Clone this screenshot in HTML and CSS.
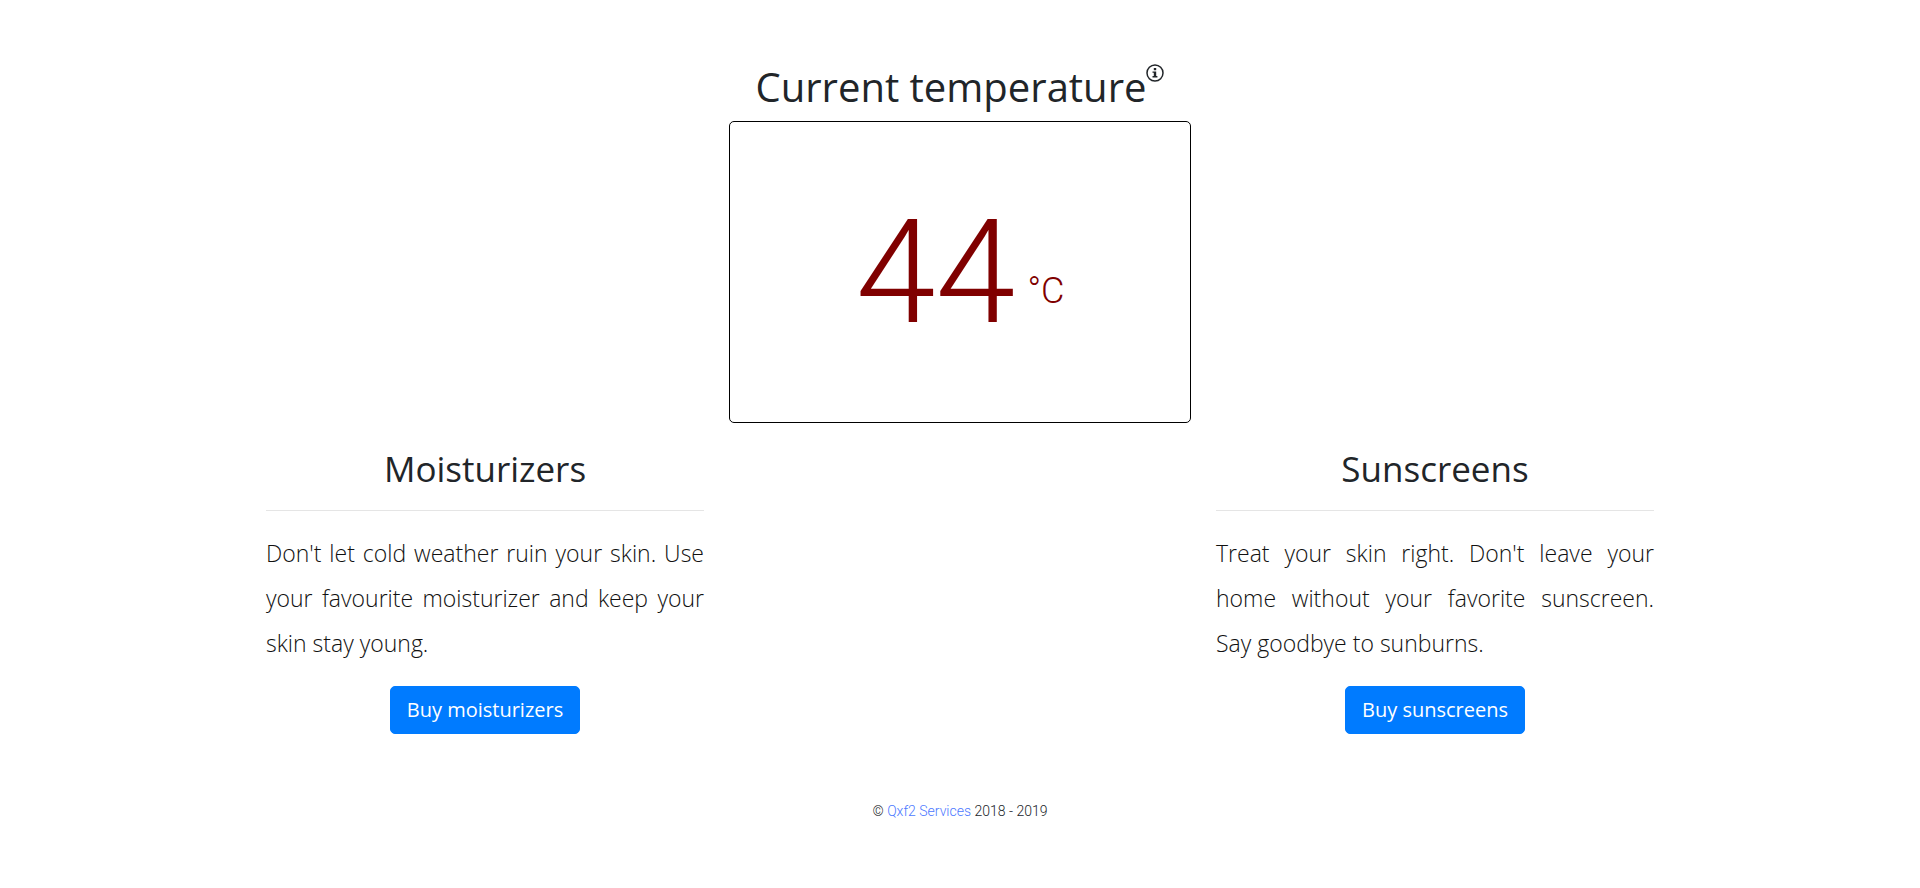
FILE: index.html
```html
<!DOCTYPE html>
<html lang="en">
<head>
<meta charset="utf-8">
<title>Current temperature</title>
<link rel="stylesheet" href="styles.css">
</head>
<body>
<main class="page">
  <header class="top">
    <h1 class="title">Current temperature</h1>
    <svg class="info" viewBox="0 0 18 18" role="img" aria-label="Information"><circle cx="9" cy="9" r="8" fill="none" stroke="currentColor" stroke-width="1.5"/><path d="M7.8 4h2.4v2.2H7.8zM6.5 7.4h3.7v4.7h1.2v1.3H6.5v-1.3h1.3V8.7H6.5z" fill="currentColor"/></svg>
  </header>
  <div class="columns">
    <p class="reading"><span class="degrees">44</span><span class="unit">°C</span></p>
    <section class="product product-left">
      <h2 class="heading">Moisturizers</h2>
      <hr class="rule">
      <p class="text">Don't let cold weather ruin your skin. Use your favourite moisturizer and keep your skin stay young.</p>
      <button class="buy" type="button">Buy moisturizers</button>
    </section>
    <section class="product product-right">
      <h2 class="heading">Sunscreens</h2>
      <hr class="rule">
      <p class="text">Treat your skin right. Don't leave your home without your favorite sunscreen. Say goodbye to sunburns.</p>
      <button class="buy" type="button">Buy sunscreens</button>
    </section>
  </div>
  <footer class="footer">© <a class="link" href="#">Qxf2 Services</a> 2018 - 2019</footer>
</main>
</body>
</html>
```
FILE: styles.css
```css
* { box-sizing: border-box; }
body {
  margin: 0;
  background: #fff;
  color: #212529;
  font-family: "Open Sans", sans-serif;
}
.page {
  max-width: 1412px;
  margin: 0 auto;
  padding: 64px 0 24px;
}
.top {
  display: flex;
  justify-content: center;
  align-items: flex-start;
}
.title {
  margin: 0 0 11px;
  font-size: 40px;
  line-height: 46px;
  font-weight: 400;
}
.info { width: 18px; height: 18px; flex: none; }
.columns {
  display: grid;
  grid-template-columns: repeat(3, 1fr);
  column-gap: 13px;
  row-gap: 24px;
}
.reading {
  grid-area: 1 / 2;
  display: flex;
  justify-content: center;
  align-items: flex-end;
  gap: 12px;
  margin: 0;
  padding: 65px 0 63px;
  border: 1px solid #000;
  border-radius: 5px;
  color: maroon;
  font-family: Roboto, sans-serif;
  font-weight: 300;
}
.degrees { font-size: 144px; line-height: 172px; }
.unit { font-size: 36px; line-height: 136px; }
.product {
  grid-row: 2;
  padding: 0 12px;
  text-align: center;
}
.product-left { grid-column: 1; }
.product-right { grid-column: 3; }
.heading {
  margin: 0;
  font-size: 35px;
  line-height: 43px;
  font-weight: 400;
}
.rule {
  margin: 20px 0;
  border: 0;
  border-top: 1px solid #e5e5e5;
}
.text {
  margin: 0 0 20px;
  color: #111;
  font-size: 23px;
  line-height: 45px;
  font-weight: 300;
  text-align: justify;
}
.buy {
  padding: 8px 16px;
  border: 1px solid #007bff;
  border-radius: 5px;
  background: #007bff;
  color: #fff;
  font: 400 20px/30px "Open Sans", sans-serif;
  cursor: pointer;
}
.footer {
  margin-top: 64px;
  text-align: center;
  font: 300 14px/26px Roboto, sans-serif;
}
.link { color: #4d79ff; text-decoration: none; }
```
